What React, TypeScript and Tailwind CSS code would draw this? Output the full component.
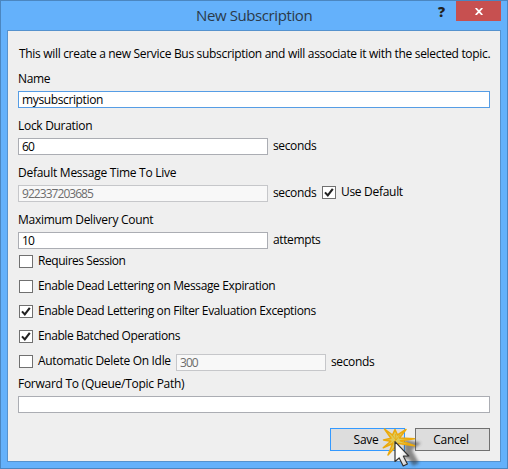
import type { ReactNode } from "react";

function Check({ checked = false }: { checked?: boolean }) {
  return (
    <span className="flex h-[13px] w-[14px] shrink-0 items-center justify-center border border-[#707070] bg-white">
      {checked && (
        <svg width="12" height="11" viewBox="0 0 12 11" fill="none">
          <path d="M2 5.4 L4.8 8.4 L9.8 1.8" stroke="#212121" strokeWidth="2.1" />
        </svg>
      )}
    </span>
  );
}

function Field({ className, children }: { className: string; children?: ReactNode }) {
  return (
    <div className={`flex h-[17px] shrink-0 items-center whitespace-pre border pl-[3px] ${className}`}>
      {children}
    </div>
  );
}

function Label({ className = "", children }: { className?: string; children: ReactNode }) {
  return <span className={`block h-4 leading-4 whitespace-pre ${className}`}>{children}</span>;
}

function Cursor() {
  return (
    <svg className="absolute top-[422px] left-[379px]" width="48" height="45" viewBox="0 0 48 45">
      <defs>
        <filter id="soft" x="-40%" y="-40%" width="180%" height="180%">
          <feGaussianBlur stdDeviation="1.8" />
        </filter>
        <linearGradient id="arrow" x1="0" y1="0" x2="1" y2="1">
          <stop offset="0.4" stopColor="#ffffff" />
          <stop offset="1" stopColor="#c5c5c5" />
        </linearGradient>
      </defs>
      <path
        d="M20 17 L37 21 L28 28 L35 41 L29 44 L24 36 L21 38 Z"
        transform="translate(4 -1)"
        fill="#333"
        opacity="0.55"
        filter="url(#soft)"
      />
      <path
        d="M4.5 6 L12.5 12 L15 6.5 L17.5 12 L26 6.5 L19.5 15 L34.5 15.7 L20.5 17.8 L34.5 22.7 L18.5 20.5 L8 32 L12.8 20.5 L3.2 24.7 L10.8 18.3 L3.5 17 L11 15.2 Z"
        fill="#dfca58"
        stroke="#eba90c"
        strokeWidth="1.5"
        strokeLinejoin="round"
      />
      <path
        d="M12 12 L16 17 L20 12 M15.5 11 L16 17 L12 20"
        stroke="#eaa90d"
        strokeWidth="0.8"
        fill="none"
      />
      <path
        d="M15 18.6 L15 38.5 L19.2 35 L23.2 43 L27.4 41 L23.4 33.2 L28.8 33 Z"
        fill="url(#arrow)"
        stroke="#333"
        strokeWidth="1.2"
        strokeLinejoin="round"
      />
    </svg>
  );
}

export default function App() {
  return (
    <div className="relative flex h-[469px] w-[508px] flex-col border border-[#4b86c0] bg-[#64b1fb] font-['Open_Sans','Noto_Sans',sans-serif] text-[12px] tracking-[-0.37px] text-black">
      <header className="flex h-[29px] shrink-0 items-start">
        <h1 className="h-[29px] w-[426px] pl-[195px] text-[15px] leading-[29px] tracking-[-0.4px] whitespace-pre text-[#2b3a4a]">
          New Subscription
        </h1>
        <span className="w-[29px] pl-[11px] text-[14px] leading-[21px] font-extrabold text-[#222]">?</span>
        <button className="flex h-5 w-[45px] items-center justify-center bg-[#c75050]">
          <svg width="8" height="7" viewBox="0 0 8 7">
            <path d="M0.7 0 L7.3 7 M7.3 0 L0.7 7" stroke="white" strokeWidth="1.8" />
          </svg>
        </button>
      </header>
      <main className="ml-[6px] h-[432px] w-[494px] shrink-0 border border-[#5592ce] bg-[#efefef] pl-[10px]">
        <Label className="mt-[15px] pl-px tracking-[-0.315px]">
          This will create a new Service Bus subscription and will associate it with the selected topic.
        </Label>
        <Label className="mt-[9px]">Name</Label>
        <Field className="mt-[4px] w-[472px] border-[#569de5] bg-white">mysubscription</Field>
        <Label className="mt-[10px] tracking-[-0.3px]">Lock Duration</Label>
        <div className="mt-[4px] flex h-[17px]">
          <Field className="w-[250px] border-[#abadb3] bg-white tracking-[-0.95px]">60</Field>
          <Label className="ml-[5px]">seconds</Label>
        </div>
        <Label className="mt-[10px] tracking-[-0.26px]">Default Message Time To Live</Label>
        <div className="mt-[4px] flex h-[17px]">
          <Field className="w-[250px] border-[#c6c7ca] bg-[#f8f8f8] tracking-[-0.95px] text-[#6d6d6d]">922337203685</Field>
          <Label className="ml-[5px] w-[49px]">seconds</Label>
          <div className="flex pt-px">
            <Check checked />
            <Label className="-mt-[2px] ml-[5px] tracking-[-0.3px]">Use Default</Label>
          </div>
        </div>
        <Label className="mt-[10px] tracking-[-0.28px]">Maximum Delivery Count</Label>
        <div className="mt-[4px] flex h-[17px]">
          <Field className="w-[250px] border-[#abadb3] bg-white tracking-[-0.95px]">10</Field>
          <Label className="ml-[5px]">attempts</Label>
        </div>
        <div className="mt-[6px] ml-px flex h-[25px]">
          <Check />
          <Label className="-mt-[2px] ml-[5px] tracking-[-0.45px]">Requires Session</Label>
        </div>
        <div className="ml-px flex h-[25px]">
          <Check />
          <Label className="-mt-[2px] ml-[5px]">Enable Dead Lettering on Message Expiration</Label>
        </div>
        <div className="ml-px flex h-[25px]">
          <Check checked />
          <Label className="-mt-[2px] ml-[5px]">Enable Dead Lettering on Filter Evaluation Exceptions</Label>
        </div>
        <div className="ml-px flex h-[25px]">
          <Check checked />
          <Label className="-mt-[2px] ml-[5px] tracking-[-0.42px]">Enable Batched Operations</Label>
        </div>
        <div className="ml-px flex h-[20px]">
          <Check />
          <Label className="-mt-[2px] ml-[5px] w-[138px] tracking-[-0.3px]">Automatic Delete On Idle</Label>
          <Field className="-mt-px w-[150px] border-[#c6c7ca] bg-[#f8f8f8] tracking-[-0.95px] text-[#6d6d6d]">300</Field>
          <Label className="-mt-px ml-[5px]">seconds</Label>
        </div>
        <Label className="mt-px tracking-[-0.27px]">Forward To (Queue/Topic Path)</Label>
        <Field className="mt-[4px] w-[472px] border-[#abadb3] bg-white" />
        <div className="mt-[15px] flex w-[472px] justify-end gap-[10px]">
          <button className="h-[23px] w-[75px] border border-[#3399ff] bg-[#dddddd] pr-[3px] tracking-[-0.3px]">Save</button>
          <button className="h-[23px] w-[75px] border border-[#707070] bg-[#dddddd] pr-[3px] tracking-[-0.3px]">Cancel</button>
        </div>
      </main>
      <Cursor />
    </div>
  );
}
